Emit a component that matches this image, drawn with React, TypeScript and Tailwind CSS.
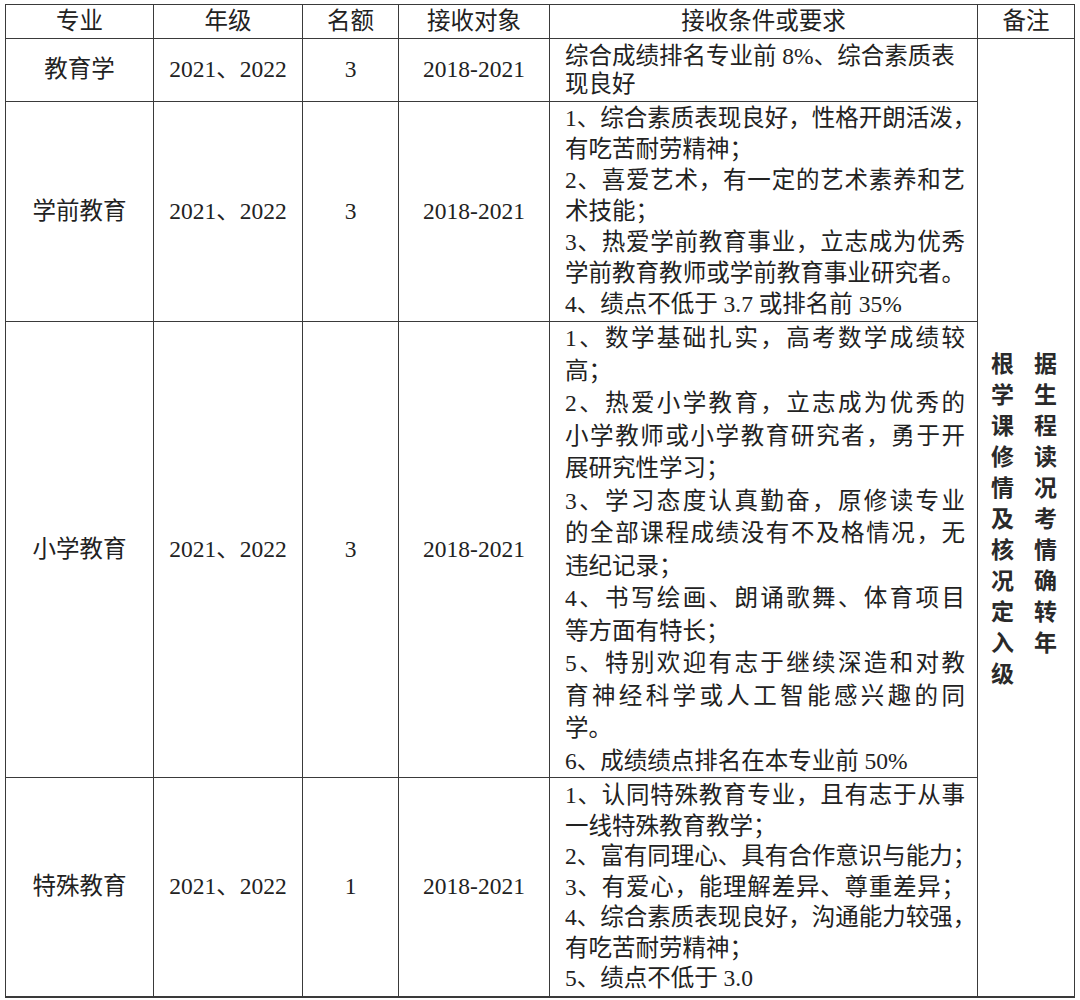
const FONT = "font-['Liberation_Serif','Noto_Sans_CJK_SC',serif]";

type Line = { t: string; full?: boolean };

interface Row {
  major: string;
  grade: string;
  quota: string;
  target: string;
  height: string;
  leading: string;
  lines: Line[];
}

const rows: Row[] = [
  {
    major: '教育学',
    grade: '2021、2022',
    quota: '3',
    target: '2018-2021',
    height: 'h-[63px]',
    leading: 'leading-[28px]',
    lines: [{ t: '综合成绩排名专业前 8%、综合素质表' }, { t: '现良好' }],
  },
  {
    major: '学前教育',
    grade: '2021、2022',
    quota: '3',
    target: '2018-2021',
    height: 'h-[220px]',
    leading: 'leading-[31px]',
    lines: [
      { t: '1、综合素质表现良好，性格开朗活泼，', full: true },
      { t: '有吃苦耐劳精神；' },
      { t: '2、喜爱艺术，有一定的艺术素养和艺', full: true },
      { t: '术技能；' },
      { t: '3、热爱学前教育事业，立志成为优秀', full: true },
      { t: '学前教育教师或学前教育事业研究者。', full: true },
      { t: '4、绩点不低于 3.7 或排名前 35%' },
    ],
  },
  {
    major: '小学教育',
    grade: '2021、2022',
    quota: '3',
    target: '2018-2021',
    height: 'h-[455px]',
    leading: 'leading-[32.5px]',
    lines: [
      { t: '1、数学基础扎实，高考数学成绩较', full: true },
      { t: '高；' },
      { t: '2、热爱小学教育，立志成为优秀的', full: true },
      { t: '小学教师或小学教育研究者，勇于开', full: true },
      { t: '展研究性学习；' },
      { t: '3、学习态度认真勤奋，原修读专业', full: true },
      { t: '的全部课程成绩没有不及格情况，无', full: true },
      { t: '违纪记录；' },
      { t: '4、书写绘画、朗诵歌舞、体育项目', full: true },
      { t: '等方面有特长；' },
      { t: '5、特别欢迎有志于继续深造和对教', full: true },
      { t: '育神经科学或人工智能感兴趣的同', full: true },
      { t: '学。' },
      { t: '6、成绩绩点排名在本专业前 50%' },
    ],
  },
  {
    major: '特殊教育',
    grade: '2021、2022',
    quota: '1',
    target: '2018-2021',
    height: 'h-[219px]',
    leading: 'leading-[30.5px]',
    lines: [
      { t: '1、认同特殊教育专业，且有志于从事', full: true },
      { t: '一线特殊教育教学；' },
      { t: '2、富有同理心、具有合作意识与能力；', full: true },
      { t: '3、有爱心，能理解差异、尊重差异；', full: true },
      { t: '4、综合素质表现良好，沟通能力较强，', full: true },
      { t: '有吃苦耐劳精神；' },
      { t: '5、绩点不低于 3.0' },
    ],
  },
];

const remark = '根据学生课程修读情况及考核情况确定转入年级';
const remarkPairs: string[] = [];
for (let i = 0; i < remark.length; i += 2) remarkPairs.push(remark.slice(i, i + 2));

const cell = 'border border-[#3a3a3a] p-0 align-middle';

export default function App() {
  return (
    <div className={`bg-white pl-[5px] pt-[4px] pb-[4px] text-[#222] ${FONT}`}>
      <table className="table-fixed border-collapse border-b-2 border-[#3a3a3a] w-[1069px] text-[23.5px]">
        <colgroup>
          <col className="w-[148px]" />
          <col className="w-[149px]" />
          <col className="w-[96px]" />
          <col className="w-[151px]" />
          <col className="w-[428px]" />
          <col className="w-[97px]" />
        </colgroup>
        <thead>
          <tr className="h-[34px]">
            {['专业', '年级', '名额', '接收对象', '接收条件或要求', '备注'].map((h) => (
              <th key={h} className={`${cell} text-center font-normal leading-none`}>
                {h}
              </th>
            ))}
          </tr>
        </thead>
        <tbody>
          {rows.map((r, idx) => (
            <tr key={r.major} className={r.height}>
              <td className={`${cell} text-center`}>{r.major}</td>
              <td className={`${cell} text-center`}>{r.grade}</td>
              <td className={`${cell} text-center`}>{r.quota}</td>
              <td className={`${cell} text-center`}>{r.target}</td>
              <td className={`${cell} pl-[15px] pr-[12px] ${r.leading}`}>
                {r.lines.map((l, i) => (
                  <div
                    key={i}
                    className={`whitespace-nowrap ${l.full ? 'text-justify [text-align-last:justify]' : ''}`}
                  >
                    {l.t}
                  </div>
                ))}
              </td>
              {idx === 0 && (
                <td rowSpan={4} className={`${cell}`}>
                  <div className="pl-[13px] font-['Noto_Sans_CJK_SC',sans-serif] font-bold text-[23px] leading-[31px] tracking-[20px] text-[#2a2a2a]">
                    {remarkPairs.map((p, i) => (
                      <div key={i} className="whitespace-nowrap">
                        {p}
                      </div>
                    ))}
                  </div>
                </td>
              )}
            </tr>
          ))}
        </tbody>
      </table>
    </div>
  );
}
